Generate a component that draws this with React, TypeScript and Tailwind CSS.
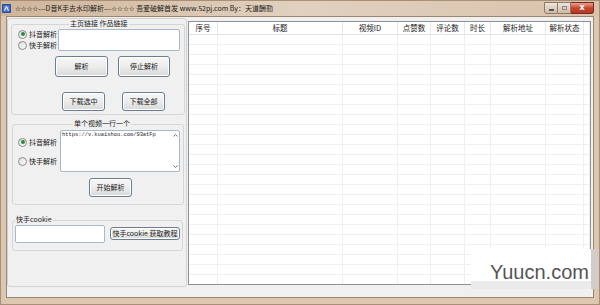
import React from "react";

const cols = [29, 125, 55, 33, 34, 26, 55, 38, 6];
const headers = ["序号", "标题", "视频ID", "点赞数", "评论数", "时长", "解析地址", "解析状态", ""];

function Radio({ checked, label }: { checked?: boolean; label: string }) {
  return (
    <div className="flex items-center h-[10px]">
      <span className="w-[9px] h-[9px] rounded-full border border-[#8a8a8a] bg-gradient-to-br from-[#dcdcdc] to-white flex items-center justify-center">
        {checked && <span className="w-[4px] h-[4px] rounded-full bg-[#2f8a3c]" />}
      </span>
      <span className="ml-[2px] text-[7px] leading-none text-[#222]">{label}</span>
    </div>
  );
}

function Btn({ className, children }: { className: string; children: React.ReactNode }) {
  return (
    <div
      className={
        "flex items-center justify-center rounded-[3px] border border-[#6a7d92] bg-gradient-to-b from-[#f7f7f7] via-[#ececec] to-[#d9d9d9] shadow-[inset_0_0_0_1px_#ffffff] text-[7px] leading-none text-[#222] " +
        className
      }
    >
      {children}
    </div>
  );
}

export default function App() {
  return (
    <div
      className="relative w-[600px] h-[305px] overflow-hidden bg-[#dcc7b0] border border-[#a98f76] flex flex-col"
      style={{ fontFamily: '"Noto Sans CJK SC", "Noto Sans", sans-serif' }}
    >
      {/* Title bar */}
      <div className="h-[15px] flex items-center bg-gradient-to-r from-[#cfb59a] via-[#e2d1bf] to-[#d8c2ab]">
        <svg width="9" height="9" viewBox="0 0 9 9" className="ml-[1px]">
          <rect x="0" y="0" width="9" height="9" rx="1" fill="#2a4fa8" />
          <rect x="1.5" y="1.5" width="6" height="6" fill="#5f86d8" />
          <path d="M2.5 6.5 L4.5 2.5 L6.5 6.5" stroke="#fff" strokeWidth="1" fill="none" />
        </svg>
        <span className="ml-[4px] text-[7px] leading-none text-[#222] whitespace-nowrap">
          <span style={{ fontFamily: '"DejaVu Sans", sans-serif' }} className="text-[6.5px] text-[#111] font-bold">☆☆☆☆</span>
          ---D音K手去水印解析---
          <span style={{ fontFamily: '"DejaVu Sans", sans-serif' }} className="text-[6.5px] text-[#111] font-bold">☆☆☆☆</span>
          {" "}吾爱破解首发 www.52pj.com By：天道酬勤
        </span>
        <div className="ml-auto mr-[5px] flex items-start self-start mt-[1px]">
          <div className="w-[14px] h-[12px] border border-[#8d7a68] rounded-bl-[3px] bg-gradient-to-b from-[#efe6dc] to-[#cdbba8] flex items-center justify-center">
            <span className="block w-[5px] h-[2px] bg-[#555] mt-[3px]" />
          </div>
          <div className="w-[13px] h-[12px] border-y border-r border-[#8d7a68] bg-gradient-to-b from-[#efe6dc] to-[#cdbba8] flex items-center justify-center">
            <span className="block w-[5px] h-[4px] border border-[#8a8a8a]" />
          </div>
          <div className="w-[23px] h-[12px] border-y border-r border-[#7a2a20] rounded-br-[3px] bg-gradient-to-b from-[#e8a090] via-[#c8452f] to-[#b53a26] flex items-center justify-center">
            <span className="text-[8px] leading-none font-bold text-white" style={{ fontFamily: '"DejaVu Sans", sans-serif' }}>x</span>
          </div>
        </div>
      </div>

      {/* Body */}
      <div className="mx-[5px] h-[282px] bg-[#f0f0f0] border border-[#9c8670] flex items-start">
        {/* Left panel */}
        <div className="ml-0 mt-[1px] w-[180px] h-[269px] border border-[#d2d2d2] rounded-[3px] flex flex-col">
          {/* Group 1 */}
          <div className="relative ml-[3px] mt-[5px] w-[174px] h-[91px] border border-[#d5d5d5] rounded-[3px] flex flex-col">
            <span className="absolute left-[57px] top-[-5px] px-[1px] bg-[#f0f0f0] text-[7px] leading-none text-[#222]">
              主页链接 作品链接
            </span>
            <div className="flex mt-[4px]">
              <div className="ml-[6px] w-[40px] flex flex-col gap-[1px] pt-[0px]">
                <Radio checked label="抖音解析" />
                <Radio label="快手解析" />
              </div>
              <div className="w-[122px] h-[22px] bg-white border border-[#a9b7c6] rounded-[2px]" />
            </div>
            <div className="flex mt-[5px]">
              <Btn className="ml-[43px] w-[53px] h-[21px]">解析</Btn>
              <Btn className="ml-[10px] w-[52px] h-[21px]">停止解析</Btn>
            </div>
            <div className="flex mt-[15px]">
              <Btn className="ml-[50px] w-[43px] h-[19px]">下载选中</Btn>
              <Btn className="ml-[17px] w-[43px] h-[19px]">下载全部</Btn>
            </div>
          </div>

          {/* Group 2 */}
          <div className="relative ml-[4px] mt-[9px] w-[172px] h-[81px] border border-[#d5d5d5] rounded-[3px] flex flex-col">
            <span className="absolute left-[60px] top-[-5px] px-[1px] bg-[#f0f0f0] text-[7px] leading-none text-[#222]">
              单个视频一行一个
            </span>
            <div className="flex mt-[5px]">
              <div className="ml-[5px] w-[42px] flex flex-col pt-[7px] gap-[9px]">
                <Radio checked label="抖音解析" />
                <Radio label="快手解析" />
              </div>
              <div className="w-[120px] h-[42px] bg-white border border-[#a9b7c6] rounded-[2px] flex">
                <span
                  className="flex-1 pl-[1px] pt-[2px] text-[5.4px] leading-none text-[#222] whitespace-nowrap overflow-hidden"
                  style={{ fontFamily: '"Liberation Mono", monospace' }}
                >
                  https://v.kuaishou.com/93atFp
                </span>
                <div className="w-[7px] flex flex-col items-center justify-between py-[3px]">
                  <svg width="5" height="3" viewBox="0 0 5 3"><path d="M0.5 2.5 L2.5 0.5 L4.5 2.5" stroke="#777" fill="none" /></svg>
                  <svg width="5" height="3" viewBox="0 0 5 3"><path d="M0.5 0.5 L2.5 2.5 L4.5 0.5" stroke="#777" fill="none" /></svg>
                </div>
              </div>
            </div>
            <div className="flex mt-[6px]">
              <Btn className="ml-[76px] w-[43px] h-[19px]">开始解析</Btn>
            </div>
          </div>

          {/* Group 3 */}
          <div className="relative ml-[4px] mt-[15px] w-[171px] h-[31px] border border-[#d5d5d5] rounded-[3px] flex items-start">
            <span className="absolute left-[2px] top-[-5px] px-[1px] bg-[#f0f0f0] text-[7px] leading-none text-[#222]">
              快手cookie
            </span>
            <div className="ml-[2px] mt-[4px] w-[90px] h-[18px] bg-white border border-[#a9b7c6] rounded-[2px]" />
            <Btn className="ml-[5px] mt-[6px] w-[70px] h-[13px] rounded-[2px]">快手cookie 获取教程</Btn>
          </div>
        </div>

        {/* Table */}
        <div className="ml-[1px] mt-[4px] w-[403px] h-[264px] border border-[#8e9296] bg-white overflow-hidden flex flex-col">
          <div className="flex h-[13px] border-b border-[#e3e3e3] shrink-0">
            {cols.map((w, i) => (
              <div
                key={i}
                style={{ width: w }}
                className="shrink-0 h-full border-r border-[#e6e6e6] flex items-center justify-center text-[7.5px] leading-none text-[#222] whitespace-nowrap"
              >
                {headers[i]}
              </div>
            ))}
          </div>
          {Array.from({ length: 26 }).map((_, r) => (
            <div key={r} className="flex h-[10px] border-b border-[#f0f0f0] shrink-0">
              {cols.map((w, i) => (
                <div key={i} style={{ width: w }} className="shrink-0 h-full border-r border-[#efefef]" />
              ))}
            </div>
          ))}
        </div>
      </div>

      {/* Watermark overlay */}
      <div className="absolute left-[470px] top-[248px] w-[120px] h-[32px] bg-white" />
      <div className="absolute left-[470px] top-[280px] w-[120px] h-[8px] bg-[#ebebeb]" />
      <div className="absolute left-[590px] top-[248px] w-[10px] h-[40px] bg-[#d4cdc7]" />
      <span
        className="absolute left-[489px] top-[261px] text-[20px] leading-none text-[#555]"
        style={{ fontFamily: '"Liberation Sans", Arial, sans-serif' }}
      >
        Yuucn.com
      </span>
    </div>
  );
}
